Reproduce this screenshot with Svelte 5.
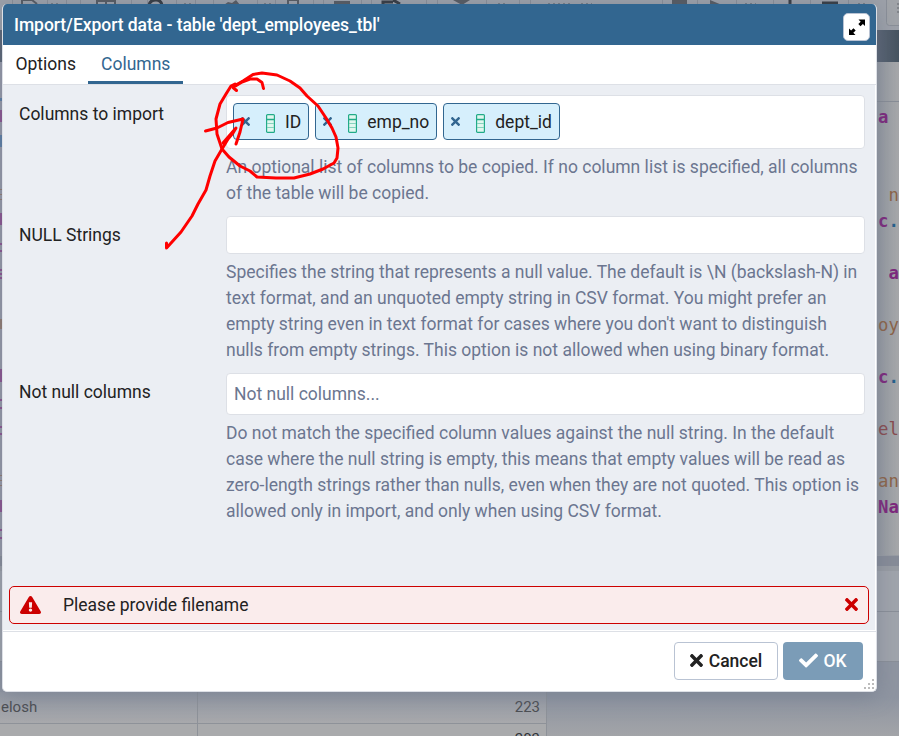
<script>
  const TIMES = 'M242.72 256l100.07-100.07c12.28-12.28 12.28-32.19 0-44.48l-22.24-22.24c-12.28-12.28-32.19-12.28-44.48 0L176 189.28 75.93 89.21c-12.28-12.28-32.19-12.28-44.48 0L9.21 111.45c-12.28 12.28-12.28 32.19 0 44.48L109.28 256 9.21 356.07c-12.28 12.28-12.28 32.19 0 44.48l22.24 22.24c12.28 12.28 32.2 12.28 44.48 0L176 322.72l100.07 100.07c12.28 12.28 32.2 12.28 44.48 0l22.24-22.24c12.28-12.28 12.28-32.19 0-44.48L242.72 256z';
  const columns = ['ID', 'emp_no', 'dept_id'];
  const nullHelp = [
    'Specifies the string that represents a null value. The default is \\N (backslash-N) in',
    'text format, and an unquoted empty string in CSV format. You might prefer an',
    "empty string even in text format for cases where you don't want to distinguish",
    'nulls from empty strings. This option is not allowed when using binary format.'
  ];
  const notNullHelp = [
    'Do not match the specified column values against the null string. In the default',
    'case where the null string is empty, this means that empty values will be read as',
    'zero-length strings rather than nulls, even when they are not quoted. This option is',
    'allowed only in import, and only when using CSV format.'
  ];
  const copyHelp = [
    'An optional list of columns to be copied. If no column list is specified, all columns',
    'of the table will be copied.'
  ];
  const code = [
    [['a', 'kw'], [" '", 'str']], [], [], [[' n', 'str']], [['c', 'kw'], ['.', 'op']], [],
    [[' a', 'kw']], [], [['oy', 'str']], [], [['c', 'kw'], ['.', 'op']], [], [['el', 'red']], [],
    [['an', 'str']], [['Na', 'kw']]
  ];
</script>

{#snippet help(lines)}
  <div class="help">{#each lines as line}<div>{line}</div>{/each}</div>
{/snippet}

{#snippet times(w, h)}
  <svg width={w} height={h} viewBox="0 80 352 352" preserveAspectRatio="none"><path fill="currentColor" d={TIMES} /></svg>
{/snippet}

<div class="screen">
  <div class="app">
    <div class="toolbar">
      <svg width="899" height="30" viewBox="0 0 899 30">
        <path d="M12.500 0V5M47.500 0V5M66.500 0V5M80.500 0V5M131.500 0V5M147.500 0V5M176.500 0V5M195.500 0V5M213.500 0V5M257.500 0V5M275.500 0V5M313.500 0V5M323.500 0V5M361.500 0V5M371.500 0V5M426.500 0V5M437.500 0V5M463.500 0V5M486.500 0V5M519.500 0V5M530.500 0V5M662.500 0V5M697.500 0V5M736.500 0V5M773.500 0V5M810.500 0V5M848.500 0V5" stroke="#898e97" fill="none" />
        <path d="M453 0H470L462 5ZM672 0H687V5H672ZM710 0L722 5H710ZM334 1H350V4H334ZM224 5L228 2L232 3L236 0L240 5Z" fill="#555960" />
        <path d="M22 5V0H32L37 4M97 5V1H115V5M106 1V5M288 5V0H298V5" fill="none" stroke="#555960" stroke-width="2" />
        <path d="M149 5Q150 0 156 0Q161 0 162 5M383 5V2H393M393 0L400 4M790 0V4M822 3H838" stroke="#343940" stroke-width="3" fill="none" />
        <path d="M51 3.500H58M184 3.500H191M264 3.500H271M498 3.500H507M548 3.500H573M581 3.500H592M745 3.500H756M858 3.500H867" stroke="#777b82" stroke-dasharray="2 3" />
        <rect x="886.500" y="-6" width="30" height="31.500" rx="3" fill="#a1a4a9" stroke="#8a8f98" />
        <path d="M898 3V13" stroke="#62666d" stroke-dasharray="2 2" />
      </svg>
    </div>
    <div class="band"></div>
    <div class="query">
      <svg width="2" height="493" viewBox="0 62 2 493">
        <path fill="#9699a7" d="M0 62H2V555H0Z" />
        <path fill="#8b528f" d="M0 110H2V122H0ZM0 213H2V225H0ZM0 243H2V245H0ZM0 250H2V252H0ZM0 269H2V271H0ZM0 273H2V275H0ZM0 277H2V279H0ZM0 369H2V382H0ZM0 399H2V401H0ZM0 407H2V409H0ZM0 426H2V428H0ZM0 433H2V435H0ZM0 500H2V512H0ZM0 529H2V531H0ZM0 537H2V539H0Z" />
        <path fill="#5b7ea4" d="M0 98H2V101H0ZM0 135H2V147H0Z" />
        <path fill="#917b70" d="M0 189H2V190H0ZM0 194H2V195H0ZM0 199H2V200H0ZM0 319H2V329H0ZM0 475H2V476H0ZM0 480H2V481H0ZM0 485H2V486H0Z" />
      </svg>
      <div class="right">
        <div class="head"></div>
        <pre>{#each code as line}<div>{#each line as [text, tone]}<span class={tone}>{text}</span>{/each}</div>{/each}</pre>
      </div>
    </div>
    <div class="results">
      <div class="splitter"></div>
      <div class="row"></div>
      <div class="row tall"></div>
      <div class="grid">
        <div class="cells"><span>elosh</span><b>223</b></div>
        <div class="cells next"><span></span><b>203</b></div>
      </div>
    </div>
  </div>

  <div class="dialog">
    <div class="title">
      <span>Import/Export data - table 'dept_employees_tbl'</span>
      <div class="max" aria-label="Maximize">
        <svg width="18" height="18" viewBox="0 0 18 18"><path d="M10.500 1.500H17V8L14.900 5.900L12.500 8.300L10.300 6.100L12.700 3.700ZM7.500 17H1V10.500L3.100 12.600L5.500 10.200L7.700 12.400L5.300 14.800Z" /></svg>
      </div>
    </div>
    <div class="tabs"><div class="tab first">Options</div><div class="tab active">Columns</div></div>
    <div class="body">
      <div class="field">
        <div class="label">Columns to import</div>
        <div class="control">
          <div class="input chips">
            {#each columns as name}
              <div class="chip">
                {@render times(9, 9)}
                <svg class="col" width="9" height="19" viewBox="0 0 9 19"><rect x=".6" y=".6" width="7.800" height="17.800" rx="1" fill="#e1f7ef" stroke="#22ab88" stroke-width="1.200" /><path d="M1 5.500H8" stroke="#22ab88" stroke-width="1.300" /><path d="M1 9.500H8M1 13.500H8" stroke="#86d3bf" /></svg>
                <span>{name}</span>
              </div>
            {/each}
          </div>
          {@render help(copyHelp)}
        </div>
      </div>
      <div class="field second">
        <div class="label">NULL Strings</div>
        <div class="control"><div class="input text"></div>{@render help(nullHelp)}</div>
      </div>
      <div class="field third">
        <div class="label">Not null columns</div>
        <div class="control"><div class="input select">Not null columns...</div>{@render help(notNullHelp)}</div>
      </div>
      <div class="alert">
        <svg width="21" height="18" viewBox="0 0 576 512" preserveAspectRatio="none"><path fill="#c00" d="M569.517 440.013C587.975 472.007 564.806 512 527.940 512H48.054c-36.937 0-59.999-40.055-41.577-71.987L246.423 23.985c18.467-32.009 64.720-31.951 83.154 0l239.940 416.028zM288 354c-25.405 0-46 20.595-46 46s20.595 46 46 46 46-20.595 46-46-20.595-46-46-46zm-43.673-165.346l7.418 136c.347 6.364 5.609 11.346 11.982 11.346h48.546c6.373 0 11.635-4.982 11.982-11.346l7.418-136c.375-6.874-5.098-12.654-11.982-12.654h-63.383c-6.884 0-12.356 5.780-11.981 12.654z" /></svg>
        <span>Please provide filename</span>
        <div class="close">{@render times(13, 13)}</div>
      </div>
    </div>
    <div class="footer">
      <div class="btn cancel">{@render times(13, 13)}<span>Cancel</span></div>
      <div class="btn ok"><svg width="19" height="19" viewBox="0 0 512 512"><path fill="#fff" d="M173.898 439.404l-166.400-166.400c-9.997-9.997-9.997-26.206 0-36.204l36.203-36.204c9.997-9.998 26.207-9.998 36.204 0L192 312.690 432.095 72.596c9.997-9.997 26.207-9.997 36.204 0l36.203 36.204c9.997 9.997 9.997 26.206 0 36.204l-294.400 294.401c-9.998 9.997-26.207 9.997-36.204-.001z" /></svg><span>OK</span></div>
      <svg class="grip" width="10" height="10" viewBox="0 0 10 10"><path d="M8 0h2v2H8zM4 4h2v2H4zM8 4h2v2H8zM0 8h2v2H0zM4 8h2v2H4zM8 8h2v2H8z" fill="#bcbcbc" /></svg>
    </div>
  </div>

  <svg class="ink" width="899" height="736" viewBox="0 0 899 736">
    <path d="M236.500 90.500L233 87.500L242 82L250 79H257L262 82.500L263.500 88.500" />
    <path d="M234 86L243 81L253 74.500L262 73L277 75L290 81L300 88L307 96L318 106L326 118L332 128L336 137L338 148L337 158L334 163L323 169L310 174L294 178H276L257 177L250 171L240 166L229 157L222 149L217 134L216 119L220 104L226 94L231 86L235 84" />
    <path d="M166.500 243V248L181 232L192 216L198 204L206 190L210 176L215 161L222 149L228 139L233 133L236 128L223 143" />
    <path d="M205.500 131L217 128L228 122.500L243 119L240 132L236 144" />
  </svg>
</div>

<style>
  :global(body) { margin: 0; overflow: hidden; }
  * { box-sizing: border-box; }
  .screen { position: relative; width: 899px; height: 736px; overflow: hidden; font-family: Roboto, "Open Sans", sans-serif; font-size: 17.500px; color: #222; }
  svg { display: block; flex: none; }
  .app { width: 899px; height: 736px; background: #a0a4ac; display: flex; flex-direction: column; }
  .toolbar { height: 30px; flex: none; background: #9da1a9; }
  .band { height: 32px; flex: none; background: linear-gradient(90deg, #596373 877px, #465460 899px); }
  .query { height: 493px; flex: none; display: flex; justify-content: space-between; }
  .right { width: 22px; background: linear-gradient(90deg, #9499a1, #a7a8aa); }
  .head { height: 40px; border-bottom: 1px solid #888d96; }
  pre { margin: 2px 0 0 1px; font: 17.300px/26px "DejaVu Sans Mono", monospace; }
  pre div { height: 26px; }
  .kw { color: #7d287c; font-weight: bold; }
  .str { color: #8c6448; }
  .op { color: #24618c; font-weight: bold; }
  .red { color: #884b4e; }
  .results { flex: 1; display: flex; flex-direction: column; }
  .splitter { height: 16px; flex: none; background: #878c98; border-bottom: 5px solid #989ca3; border-top: 1px solid #989ca3; }
  .row { height: 41px; flex: none; border-bottom: 1px solid #8a8f98; }
  .tall { height: 50px; }
  .grid { flex: none; height: 74px; overflow: hidden; padding-top: 30px; background: linear-gradient(#8f95a1, #8f95a1 35px, #a2a4a8); font-size: 15px; color: #4d4f54; }
  .cells { display: flex; width: 547px; height: 32px; background: linear-gradient(#9499a4, #a8a9ac); border-bottom: 1px solid #8e9299; border-right: 1px solid #8e9299; line-height: 30px; }
  .cells span { width: 198px; padding-left: 1px; border-right: 1px solid #8e9299; }
  .cells b { flex: 1; text-align: right; padding-right: 6px; font-weight: 400; }
  .next { background: #a9aaac; color: #303338; }
  .dialog { position: absolute; left: 2px; top: 4px; width: 875px; height: 688px; display: flex; flex-direction: column; background: #fff; border: 1px solid #dde0e6; border-top: 0; border-radius: 5px; overflow: hidden; box-shadow: 0 4px 22px #59667e66; }
  .title { height: 41px; margin: 0 -1px; flex: none; background: #326690; color: #fff; display: flex; justify-content: space-between; align-items: center; padding: 0 7px 0 12px; font-weight: 500; }
  .title span { letter-spacing: -.050px; }
  .max { width: 27px; height: 28px; margin-top: 5px; background: #fff; border: 1px solid #b9c3d3; border-radius: 5px; display: flex; align-items: center; justify-content: center; }
  .tabs { height: 40px; flex: none; display: flex; border-bottom: 1px solid #dde0e6; }
  .tab { padding: 0 13px; line-height: 39px; height: 39px; }
  .first { padding-right: 12px; padding-left: 12.500px; }
  .active { color: #326690; border-bottom: 3px solid #326690; }
  .body { height: 545px; flex: none; background: #ebeef3; border-right: 1px solid #fff; padding: 10px 6px 6px; display: flex; flex-direction: column; }
  .field { display: flex; }
  .label { width: 217px; flex: none; padding-left: 10px; line-height: 39px; }
  .control { width: 639px; flex: none; }
  .input { background: #fff; border: 1px solid #dde0e6; border-radius: 4px; }
  .chips { height: 54px; padding: 7px 6px; display: flex; gap: 6px; }
  .chip { height: 37px; border: 1px solid #326690; border-radius: 4px; background: #d6effc; display: flex; align-items: center; padding: 0 7px; color: #222; }
  .chip > svg:first-child { color: #326690; }
  .col { margin: 3px 10px 0 16px; }
  .help { line-height: 26px; padding-top: 5px; color: #6b7690; white-space: nowrap; }
  .second { margin-top: 10px; }
  .text { height: 38px; }
  .third { margin-top: 10px; }
  .select { height: 42px; line-height: 40px; padding-left: 7px; color: #6b7690; }
  .alert { margin-top: auto; height: 38px; flex: none; display: flex; align-items: center; border: 1px solid #c00; border-radius: 5px; background: #faecec; padding: 0 10px 1px; }
  .alert span { margin-left: 22px; }
  .close { margin-left: auto; color: #c00; }
  .footer { position: relative; height: 60px; margin-top: 1px; border-top: 1px solid #dde0e6; padding: 10px 13px 0; display: flex; gap: 5px; justify-content: flex-end; }
  .btn { height: 38px; border-radius: 4px; display: flex; align-items: center; gap: 6px; justify-content: center; font-weight: 500; padding-bottom: 1px; }
  .cancel { width: 104px; border: 1px solid #b9c3d3; }
  .ok { width: 80px; background: #7b9cb7; color: #fff; gap: 5px; }
  .grip { position: absolute; right: 2px; bottom: 2px; }
  .ink { position: absolute; left: 0; top: 0; pointer-events: none; }
  .ink path { fill: none; stroke: #f00; stroke-width: 3; stroke-linecap: round; stroke-linejoin: round; }
</style>
